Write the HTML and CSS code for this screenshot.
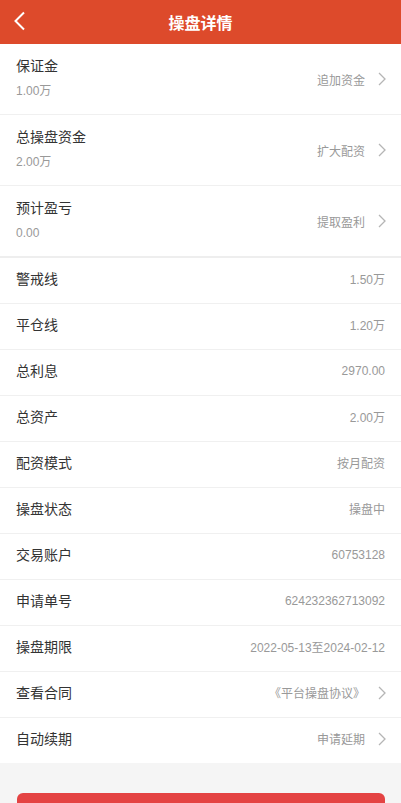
FILE: index.html
```html
<!DOCTYPE html>
<html lang="zh">
<head>
<meta charset="utf-8">
<title>操盘详情</title>
<link rel="stylesheet" href="styles.css">
</head>
<body>
<header class="topbar">
  <span class="back"><svg width="14" height="20" viewBox="0 0 14 20"><path d="M11 1.5 L2.5 10 L11 18.5" fill="none" stroke="#fff" stroke-width="2"/></svg></span>
  <h1 class="title">操盘详情</h1>
</header>

<section class="group big">
  <div class="row tall">
    <div class="left"><div class="label">保证金</div><div class="sub">1.00万</div></div>
    <div class="right">追加资金<svg class="chev" width="8" height="14" viewBox="0 0 8 14"><path d="M1 1 L7 7 L1 13" fill="none" stroke="#b5b5b5" stroke-width="1.3"/></svg></div>
  </div>
  <div class="row tall">
    <div class="left"><div class="label">总操盘资金</div><div class="sub">2.00万</div></div>
    <div class="right">扩大配资<svg class="chev" width="8" height="14" viewBox="0 0 8 14"><path d="M1 1 L7 7 L1 13" fill="none" stroke="#b5b5b5" stroke-width="1.3"/></svg></div>
  </div>
  <div class="row tall">
    <div class="left"><div class="label">预计盈亏</div><div class="sub">0.00</div></div>
    <div class="right">提取盈利<svg class="chev" width="8" height="14" viewBox="0 0 8 14"><path d="M1 1 L7 7 L1 13" fill="none" stroke="#b5b5b5" stroke-width="1.3"/></svg></div>
  </div>
</section>

<section class="group list">
  <div class="row"><div class="label">警戒线</div><div class="right">1.50万</div></div>
  <div class="row"><div class="label">平仓线</div><div class="right">1.20万</div></div>
  <div class="row"><div class="label">总利息</div><div class="right">2970.00</div></div>
  <div class="row"><div class="label">总资产</div><div class="right">2.00万</div></div>
  <div class="row"><div class="label">配资模式</div><div class="right">按月配资</div></div>
  <div class="row"><div class="label">操盘状态</div><div class="right">操盘中</div></div>
  <div class="row"><div class="label">交易账户</div><div class="right">60753128</div></div>
  <div class="row"><div class="label">申请单号</div><div class="right">624232362713092</div></div>
  <div class="row"><div class="label">操盘期限</div><div class="right">2022-05-13至2024-02-12</div></div>
  <div class="row"><div class="label">查看合同</div><div class="right">《平台操盘协议》<svg class="chev" width="8" height="14" viewBox="0 0 8 14"><path d="M1 1 L7 7 L1 13" fill="none" stroke="#b5b5b5" stroke-width="1.3"/></svg></div></div>
  <div class="row last"><div class="label">自动续期</div><div class="right">申请延期<svg class="chev" width="8" height="14" viewBox="0 0 8 14"><path d="M1 1 L7 7 L1 13" fill="none" stroke="#b5b5b5" stroke-width="1.3"/></svg></div></div>
</section>

<div class="footer">
  <div class="btn"></div>
</div>
</body>
</html>
```

FILE: styles.css
```css
* { box-sizing: border-box; }
html, body {
  margin: 0;
  padding: 0;
  background: #f5f5f5;
  font-family: "Liberation Sans", "Noto Sans CJK SC", sans-serif;
}
.topbar {
  height: 44px;
  background: #dd4a2b;
  display: flex;
  align-items: center;
  justify-content: center;
  position: relative;
}
.back {
  position: absolute;
  left: 13px;
  top: 11px;
  display: flex;
}
.title {
  margin: 0;
  color: #fff;
  font-size: 16px;
  font-weight: bold;
  font-family: "Noto Sans CJK SC", sans-serif;
}
.group {
  background: #fff;
}
.group.big {
  border-bottom: 2px solid #eeeeee;
}
.row {
  display: flex;
  align-items: center;
  justify-content: space-between;
  height: 46px;
  padding: 0 16px 4px;
  border-bottom: 1px solid #f0f0f0;
}
.row.tall {
  height: 71px;
  padding-bottom: 0;
}
.group.big .row.tall:last-child {
  border-bottom: none;
  height: 70px;
}
.row.last {
  border-bottom: none;
  height: 45px;
}
.label {
  font-size: 14px;
  line-height: 18px;
  color: #333;
}
.sub {
  font-size: 12px;
  line-height: 16px;
  color: #999;
  margin-top: 8px;
}
.left {
  display: flex;
  flex-direction: column;
  margin-top: -2px;
}
.right {
  font-size: 12px;
  color: #999;
  display: flex;
  align-items: center;
}
.chev {
  margin-left: 13px;
  margin-right: -1px;
}
.footer {
  padding: 30px 16px 20px 17px;
}
.btn {
  width: 368px;
  height: 44px;
  border-radius: 6px;
  background: #e44343;
}
```
